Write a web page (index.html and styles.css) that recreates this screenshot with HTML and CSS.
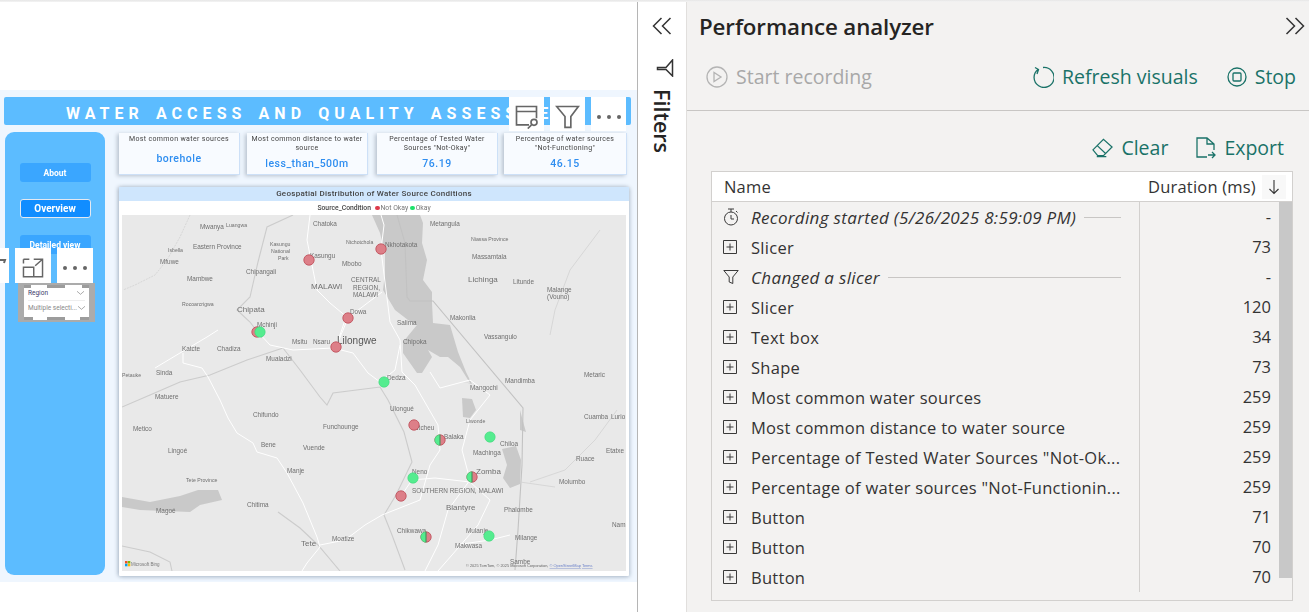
FILE: index.html
```html
<!DOCTYPE html>
<html lang="en">
<head>
<meta charset="utf-8">
<title>Performance analyzer</title>
<link rel="stylesheet" href="styles.css">
</head>
<body>
<div class="app">
  <section class="canvas">
    <div class="report">
      <header class="title-bar"><span>WATER&nbsp; ACCESS&nbsp; AND&nbsp; QUALITY&nbsp; ASSESSMENT</span></header>
      <div class="report-body">
        <nav class="side-nav">
          <div class="nav-btn">About</div>
          <div class="nav-btn nav-active">Overview</div>
          <div class="nav-btn">Detailed view</div>
        </nav>
        <div class="report-main">
          <div class="cards">
            <div class="card card-a"><div class="card-label">Most common water sources</div><div class="card-value card-value-low">borehole</div></div>
            <div class="card card-b"><div class="card-label">Most common distance to water source</div><div class="card-value">less_than_500m</div></div>
            <div class="card card-c"><div class="card-label">Percentage of Tested Water Sources "Not-Okay"</div><div class="card-value">76.19</div></div>
            <div class="card card-d"><div class="card-label">Percentage of water sources "Not-Functioning"</div><div class="card-value">46.15</div></div>
          </div>
          <div class="map-card">
            <div class="map-title">Geospatial Distribution of Water Source Conditions</div>
            <div class="legend"><b>Source_Condition</b><i class="dot dot-red"></i>Not Okay<i class="dot dot-green"></i>Okay</div>
            <svg class="map" viewBox="122 215 504 356" aria-label="Map of Malawi">
              <rect x="122" y="215" width="504" height="356" fill="#e9e9e9"/>
              <g fill="#c9c9c9">
                <path d="M372 215L380 233L385 253L385 273L383 290L395 310L408 320L417 325L403 342L403 353L417 373L422 373L432 357L428 350L440 357L448 357L460 367L470 383L463 382L472 384L466 372L458 352L450 325L433 323L432 303L432 292L423 280L427 260L422 243L423 223L420 215Z"/>
                <path d="M462 398L472 399L476 410L470 418L463 417Z"/>
                <path d="M502 449L516 446L521 460L520 484L510 488L503 478L507 465Z"/>
                <path d="M122 497L150 502L180 496L198 490L218 490L222 500L200 505L190 512L165 511L140 510L122 507Z"/>
                <path d="M520 410L524 425L526 432L520 430Z"/>
              </g>
              <g fill="none" stroke="#cccccc" stroke-width="1.100">
                <path d="M293 215L267 227L258 262L250 297L237 310L250 322L262 338"/>
                <path d="M122 407L150 395L180 382L210 375L247 360L283 348"/>
                <path d="M283 348L300 370L320 397L327 405L333 393L380 387L388 400L404 432L412 462L396 495L384 515L392 535L405 570"/>
                <path d="M397 215L405 243L407 297L410 301L433 301L523 408L522 465L518 530L515 570" stroke="#c2c2c2"/>
                <path d="M122 546L150 552L170 562L172 571"/>
                <path d="M278 512L300 528L318 545L340 571"/>
              </g>
              <g fill="none" stroke="#d2d2d2" stroke-width=".8">
                <path d="M190 215L180 237L167 260L155 275L135 285L123 290" stroke-dasharray="2 1"/>
                <path d="M600 230L570 270L555 310L550 335"/>
                <path d="M617 410L595 440L565 470L530 482"/>
                <path d="M520 482L555 487"/>
              </g>
              <g fill="none" stroke="#fff" stroke-width="1">
                <path d="M155 368L180 353L207 337L218 330M183 353L183 363L202 368L208 377L220 400L228 418L237 433L253 443L257 452L277 458L287 473L303 503L317 537L320 547L307 563L302 571"/>
                <path d="M320 545L345 540L365 525L382 515L420 500L430 465L440 450L438 425L415 385L402 372L400 340L390 322L381 250L384 225L381 215"/>
                <path d="M258 332L270 345L293 350L333 348L353 353L368 373L380 382L395 370L400 345"/>
                <path d="M310 215L307 240L317 290L330 303L348 318L336 347L345 320L382 292"/>
                <path d="M430 372L440 388L470 380L490 395L470 420L462 450L470 480L448 510L438 545L425 571"/>
                <path d="M401 496L412 480L435 478L470 482L490 500L478 525L452 555L438 571"/>
                <path d="M455 545L490 540L510 535"/>
              </g>
              <g class="map-labels">
                <text x="200" y="229">Mwanya</text><text x="226" y="227" class="xs">Luangwa</text><text x="313" y="226">Chatoka</text><text x="193" y="249">Eastern Province</text>
                <text x="270" y="246" class="xs">Kasungu</text><text x="271" y="253" class="xs">National</text><text x="278" y="260" class="xs">Park</text>
                <text x="160" y="264">Mfuwe</text><text x="168" y="252" class="xs">Isbella</text><text x="246" y="274">Chipangali</text><text x="187" y="281">Mambwe</text><text x="182" y="306" class="xs">Rocoarcrigwa</text>
                <text x="237" y="312" class="md">Chipata</text><text x="257" y="327">Mchinji</text><text x="310" y="258">Kasungu</text><text x="311" y="289" class="md">MALAWI</text>
                <text x="430" y="226">Metangula</text><text x="471" y="241" class="xs">Niassa Province</text><text x="472" y="259">Massamtala</text><text x="468" y="282" class="md">Lichinga</text><text x="513" y="284">Litunde</text>
                <text x="547" y="292">Malange</text><text x="547" y="299">(Vouno)</text><text x="346" y="244" class="xs">Ntchotchola</text><text x="385" y="247">Nkhotakota</text><text x="342" y="266">Mbobo</text>
                <text x="351" y="282">CENTRAL</text><text x="353" y="290">REGION,</text><text x="353" y="297">MALAWI</text><text x="350" y="314">Dowa</text><text x="397" y="325">Salima</text><text x="450" y="320">Makonlia</text>
                <text x="182" y="351">Katcte</text><text x="217" y="351">Chadiza</text><text x="156" y="375">Sinda</text><text x="122" y="377" class="xs">Petauke</text><text x="155" y="399">Matuere</text>
                <text x="266" y="361">Mualadzi</text><text x="292" y="344">Msitu</text><text x="313" y="344">Nsaru</text><text x="337" y="344" class="lg">Lilongwe</text><text x="253" y="417">Chifundo</text>
                <text x="133" y="431">Metico</text><text x="168" y="453">Lingoé</text><text x="186" y="482" class="xs">Tete Province</text><text x="261" y="447">Bene</text><text x="323" y="429">Funchounge</text>
                <text x="303" y="450">Vuende</text><text x="287" y="473">Manje</text><text x="247" y="507">Chitima</text><text x="156" y="513">Magoé</text><text x="301" y="546" class="md">Tete</text><text x="332" y="541">Moatize</text>
                <text x="403" y="344">Chipoka</text><text x="484" y="339">Vassangulo</text><text x="387" y="380">Dedza</text><text x="390" y="411">Ulongué</text><text x="414" y="430">Ntcheu</text>
                <text x="444" y="439">Balaka</text><text x="466" y="423" class="xs">Liwonde</text><text x="505" y="383">Mandimba</text><text x="470" y="390">Mangochi</text><text x="500" y="446">Chiloa</text><text x="473" y="455">Machinga</text>
                <text x="476" y="474" class="md">Zomba</text><text x="412" y="474">Neno</text><text x="412" y="493">SOUTHERN REGION, MALAWI</text><text x="446" y="510" class="md">Blantyre</text>
                <text x="504" y="512">Phalombe</text><text x="397" y="533">Chikwawa</text><text x="466" y="533">Mulanje</text><text x="515" y="540">Milange</text><text x="455" y="548">Makwasa</text><text x="510" y="564">Sambe</text>
                <text x="584" y="377">Metaric</text><text x="584" y="419">Cuamba</text><text x="611" y="419">Lurio</text><text x="576" y="461">Ruace</text><text x="606" y="453">Etatxe</text><text x="559" y="484">Molumbo</text><text x="612" y="527">Nam</text>
              </g>
              <text x="466" y="567" class="attr">© 2025 TomTom, © 2025 Microsoft Corporation, <tspan class="attr-link">© OpenStreetMap</tspan>  <tspan class="attr-link">Terms</tspan></text>
              <g>
                <rect x="125" y="561" width="2.5" height="2.5" fill="#f25022"/><rect x="127.8" y="561" width="2.5" height="2.5" fill="#7fba00"/><rect x="125" y="563.8" width="2.5" height="2.5" fill="#00a4ef"/><rect x="127.8" y="563.8" width="2.5" height="2.5" fill="#ffb900"/>
                <text x="131" y="566" class="bing">Microsoft Bing</text>
              </g>
              <g class="pin-red">
                <circle cx="309" cy="260" r="5.200"/><circle cx="381" cy="249" r="5.200"/><circle cx="348" cy="318" r="5.200"/><circle cx="336" cy="347" r="5.200"/><circle cx="257" cy="332" r="5.200"/><circle cx="414" cy="425" r="5.200"/><circle cx="401" cy="496" r="5.200"/><circle cx="440" cy="440" r="5.200"/><circle cx="472" cy="477" r="5.200"/><circle cx="426" cy="537" r="5.200"/>
              </g>
              <g class="pin-green">
                <circle cx="260" cy="332" r="5.200"/><circle cx="384" cy="382" r="5.200"/><circle cx="490" cy="437" r="5.200"/><circle cx="413" cy="478" r="5.200"/><circle cx="489" cy="536" r="5.200"/>
                <path d="M440 434.800A5.200 5.200 0 0 0 440 445.200Z"/><path d="M472 471.800A5.200 5.200 0 0 0 472 482.200Z"/><path d="M426 531.800A5.200 5.200 0 0 0 426 542.200Z"/>
              </g>
              <path d="M440 434.800V445.200M472 471.800V482.200M426 531.800V542.200" class="pin-split"/>
            </svg>
          </div>
        </div>
      </div>
    </div>

    <div class="hover-tools tools-title">
      <div class="tool"><svg viewBox="0 0 30 30" width="25" height="25"><path d="M27 17V3H3v22h15M3 9h24" class="ico-g"/><circle cx="24" cy="22" r="3.600" class="ico-g"/><path d="M21 25l-4.500 4.500" class="ico-g"/></svg></div>
      <div class="tool"><svg viewBox="0 0 30 30" width="25" height="25"><path d="M2 3h26L19 15v13h-7V15z" class="ico-g"/></svg></div>
      <div class="tool"><span class="dots"><i></i><i></i><i></i></span></div>
    </div>
    <div class="hover-tools tools-slicer">
      <div class="tool tool-cut"><svg viewBox="0 0 9 30" width="9" height="30"><path d="M0 9h5l-1 3" class="ico-g"/></svg></div>
      <div class="tool"><svg viewBox="0 0 30 30" width="22" height="22"><path d="M16 3h12v24H2V14h14v13M2 3h8M2 3v6M18 12L28 3M21 3h7v7" class="ico-g"/></svg></div>
      <div class="tool"><span class="dots"><i></i><i></i><i></i></span></div>
    </div>
    <div class="slicer">
      <i class="handle h-tl"></i><i class="handle h-t"></i><i class="handle h-tr"></i><i class="handle h-bl"></i><i class="handle h-b"></i><i class="handle h-br"></i>
      <div class="slicer-head"><span>Region</span><svg viewBox="0 0 8 4" width="7" height="4"><path d="M0 0l4 3.500L8 0" class="ico-thin"/></svg></div>
      <div class="slicer-box"><span>Multiple selecti...</span><svg viewBox="0 0 8 4" width="7" height="4"><path d="M0 0l4 3.500L8 0" class="ico-thin"/></svg></div>
    </div>
  </section>

  <aside class="filters">
    <svg class="chev" viewBox="0 0 20 18" width="20" height="18"><path d="M9.500 1L1.500 9l8 8M18.500 1l-8 8 8 8" class="ico-dark"/></svg>
    <svg class="funnel" viewBox="0 0 18 18" width="18" height="18"><path d="M16.500 1v16L10 10.500H1.500V8.500H10z" class="ico-dark"/></svg>
    <div class="filters-label">Filters</div>
  </aside>

  <main class="panel">
    <div class="panel-head">
      <h1>Performance analyzer</h1>
      <svg viewBox="0 0 20 18" width="20" height="18"><path d="M1.500 1l8 8-8 8M10.500 1l8 8-8 8" class="ico-dark"/></svg>
    </div>
    <div class="actions">
      <div class="action action-off"><svg viewBox="0 0 22 22" width="22" height="22"><circle cx="11" cy="11" r="10" class="ico-off"/><path d="M8 6.500v9l7-4.500z" class="ico-off"/></svg>Start recording</div>
      <div class="action-right">
        <div class="action"><svg viewBox="0 0 22 22" width="22" height="22"><path d="M6 3.500A10 10 0 1 0 11 1.500M3 1.500L6.500 3.500 5 8" class="ico-teal"/></svg>Refresh visuals</div>
        <div class="action"><svg viewBox="0 0 20 20" width="20" height="20"><circle cx="10" cy="10" r="9" class="ico-teal"/><rect x="6" y="6" width="8" height="8" rx="1" class="ico-teal"/></svg><span class="stop">Stop</span></div>
      </div>
    </div>
    <div class="tools">
      <div class="action"><svg viewBox="0 0 22 20" width="21" height="20"><path d="M1 12L12 1l9 8-9 9H6zM5.500 7.500l9 8.500M5 19h10" class="ico-teal"/></svg>Clear</div>
      <div class="action"><svg viewBox="0 0 20 22" width="20" height="22"><path d="M11 20H1V1h10l7 6v6M11 1v6h7M12 18h7M16 15l3 3-3 3" class="ico-teal"/></svg>Export</div>
    </div>
    <div class="table">
      <div class="thead">
        <div class="th-name">Name</div>
        <div class="th-dur">Duration (ms)</div>
        <div class="sort"><svg viewBox="0 0 12 16" width="12" height="16"><path d="M6 1v13.500M1.500 10L6 14.500 10.500 10" class="ico-thin-dark"/></svg></div>
      </div>
      <div class="tbody">
        <div class="rows">
          <div class="row"><div class="name evt"><svg viewBox="0 0 16 18" width="16" height="18"><circle cx="8" cy="10.500" r="6.500" class="ico-row"/><path d="M5 1h6M8 1v3M8 7v4h3M13 3l1.500 1.500" class="ico-row"/></svg><em>Recording started (5/26/2025 8:59:09 PM)</em><span class="rule"></span></div><div class="dur">-</div></div>
          <div class="row"><div class="name"><svg viewBox="0 0 14 14" width="14" height="14"><path d="M.5.500h13v13H.500zM7 3.500v7M3.500 7h7" class="ico-row"/></svg>Slicer</div><div class="dur">73</div></div>
          <div class="row"><div class="name evt"><svg viewBox="0 0 16 16" width="16" height="16"><path d="M.8 1.500h14.400L9.800 8v6.500L6.200 13V8z" class="ico-row"/></svg><em>Changed a slicer</em><span class="rule"></span></div><div class="dur">-</div></div>
          <div class="row"><div class="name"><svg viewBox="0 0 14 14" width="14" height="14"><path d="M.5.500h13v13H.500zM7 3.500v7M3.500 7h7" class="ico-row"/></svg>Slicer</div><div class="dur">120</div></div>
          <div class="row"><div class="name"><svg viewBox="0 0 14 14" width="14" height="14"><path d="M.5.500h13v13H.500zM7 3.500v7M3.500 7h7" class="ico-row"/></svg>Text box</div><div class="dur">34</div></div>
          <div class="row"><div class="name"><svg viewBox="0 0 14 14" width="14" height="14"><path d="M.5.500h13v13H.500zM7 3.500v7M3.500 7h7" class="ico-row"/></svg>Shape</div><div class="dur">73</div></div>
          <div class="row"><div class="name"><svg viewBox="0 0 14 14" width="14" height="14"><path d="M.5.500h13v13H.500zM7 3.500v7M3.500 7h7" class="ico-row"/></svg>Most common water sources</div><div class="dur">259</div></div>
          <div class="row"><div class="name"><svg viewBox="0 0 14 14" width="14" height="14"><path d="M.5.500h13v13H.500zM7 3.500v7M3.500 7h7" class="ico-row"/></svg>Most common distance to water source</div><div class="dur">259</div></div>
          <div class="row"><div class="name"><svg viewBox="0 0 14 14" width="14" height="14"><path d="M.5.500h13v13H.500zM7 3.500v7M3.500 7h7" class="ico-row"/></svg>Percentage of Tested Water Sources "Not-Ok...</div><div class="dur">259</div></div>
          <div class="row"><div class="name"><svg viewBox="0 0 14 14" width="14" height="14"><path d="M.5.500h13v13H.500zM7 3.500v7M3.500 7h7" class="ico-row"/></svg>Percentage of water sources "Not-Functionin...</div><div class="dur">259</div></div>
          <div class="row"><div class="name"><svg viewBox="0 0 14 14" width="14" height="14"><path d="M.5.500h13v13H.500zM7 3.500v7M3.500 7h7" class="ico-row"/></svg>Button</div><div class="dur">71</div></div>
          <div class="row"><div class="name"><svg viewBox="0 0 14 14" width="14" height="14"><path d="M.5.500h13v13H.500zM7 3.500v7M3.500 7h7" class="ico-row"/></svg>Button</div><div class="dur">70</div></div>
          <div class="row"><div class="name"><svg viewBox="0 0 14 14" width="14" height="14"><path d="M.5.500h13v13H.500zM7 3.500v7M3.500 7h7" class="ico-row"/></svg>Button</div><div class="dur">70</div></div>
        </div>
        <div class="scroll"><div class="thumb"></div></div>
      </div>
    </div>
  </main>
</div>
</body>
</html>
```
FILE: styles.css
```css
* { box-sizing: border-box; }
html, body { margin: 0; height: 100%; overflow: hidden; }
body { font-family: "Open Sans", "Noto Sans", sans-serif; background: #fff; color: #252423; }
.app { display: flex; width: 1309px; height: 612px; position: relative; }
.app::before { content: ""; position: absolute; left: 0; right: 0; top: 0; height: 2px; background: linear-gradient(#e6e6e6, #f4f4f4); z-index: 5; }

/* Report canvas */
.canvas { width: 638px; height: 612px; border-right: 1px solid #b5b5b5; padding-top: 90px; position: relative; overflow: hidden; }
.report { height: 492px; background: #eff6fe; padding: 7px 6px 6px 4px; display: flex; flex-direction: column; gap: 7px; font-family: "Roboto", "Liberation Sans", sans-serif; filter: blur(.25px); }
.title-bar { height: 28px; flex: none; background: #5cbcff; border-radius: 2px; display: flex; align-items: center; padding: 4px 0 0 62px; color: #fff; font-weight: 700; font-size: 16px; letter-spacing: 5.05px; word-spacing: -3px; white-space: nowrap; overflow: hidden; }
.report-body { flex: 1; display: flex; gap: 14px; min-height: 0; padding-left: 1px; }
.side-nav { width: 100px; height: 443px; background: #5cbcff; border-radius: 9px; padding-top: 31px; display: flex; flex-direction: column; align-items: center; gap: 17px; flex: none; }
.nav-btn { width: 71px; height: 19px; background: #3aa6ff; border-radius: 3px; color: #fff; font-size: 8.5px; font-weight: 700; display: flex; align-items: center; justify-content: center; padding-top: 1px; }
.nav-active { background: #118dff; border: 1px solid #e4e9f2; font-size: 10px; padding-top: 0; }
.report-main { flex: 1; display: flex; flex-direction: column; gap: 12px; min-width: 0; }
.cards { display: flex; height: 43px; padding-top: 1px; }
.card { background: #f8fbff; box-shadow: -2px 1px 4px #b9c3cf; border-right: 1px solid #cde0f7; border-bottom: 1px solid #cde0f7; padding: 2px 3px 0; text-align: center; display: flex; flex-direction: column; }
.card-a { width: 121px; margin-right: 7px; }
.card-b { width: 121px; margin-right: 9px; }
.card-c { width: 121px; margin-right: 6px; }
.card-d { width: 123px; }
.card-label { font-size: 7px; line-height: 9px; letter-spacing: .35px; color: #444; height: 18px; }
.card-value { font-size: 10.500px; color: #2f8ef0; letter-spacing: .5px; line-height: 13px; padding-top: 4px; font-weight: 500; }
.card-value-low { padding-top: 0; margin-top: -1px; }
.map-card { width: 510px; height: 389px; background: #fff; box-shadow: -1px 0 4px #a9b6c6, 1px 1px 4px #c3cfdc; border-radius: 1px; display: flex; flex-direction: column; }
.map-title { height: 14px; background: #cfe6fd; font-size: 8px; font-weight: 500; letter-spacing: .28px; color: #444; text-align: center; line-height: 13px; flex: none; }
.legend { height: 14px; flex: none; display: flex; align-items: center; justify-content: center; font-size: 6.800px; color: #777; }
.legend b { color: #444; font-weight: 500; margin-right: 2px; }
.dot { width: 4.500px; height: 4.500px; border-radius: 50%; margin: 0 1px 0 2px; }
.dot-red { background: #dd3b4b; }
.dot-green { background: #1ee26b; }
.map { display: block; width: 504px; height: 356px; margin: 0 0 0 3px; flex: none; filter: blur(.2px); }
.map-labels text { font-family: "Liberation Sans", sans-serif; font-size: 6.4px; fill: #6f6f6f; }
.map-labels .xs { font-size: 5.2px; }
.map-labels .md { font-size: 8px; }
.map-labels .lg { font-size: 10px; fill: #555; }
.attr { font-family: "Liberation Sans", sans-serif; font-size: 3.900px; fill: #666; }
.attr-link { fill: #6b80c8; text-decoration: underline; }
.bing { font-family: "Liberation Sans", sans-serif; font-size: 4.500px; fill: #777; }
.pin-red circle { fill: #dd7f88; stroke: #bd4a56; stroke-width: .8; }
.pin-green circle, .pin-green path { fill: #55ec8f; stroke: #3ed67a; stroke-width: .6; }
.pin-split { fill: none; stroke: #4e6e50; stroke-width: .8; }

/* Overlays on the report */
.hover-tools { position: absolute; display: flex; gap: 6px; z-index: 2; }
.tool { width: 35px; height: 34px; background: #fff; display: flex; align-items: center; justify-content: center; padding-top: 5px; }
.tools-title { left: 509px; top: 97px; }
.tools-slicer { left: 0; top: 248px; height: 35px; }
.tools-slicer .tool { height: 35px; width: 36px; padding-top: 4px; }
.tools-slicer .tool-cut { width: 9px; padding-top: 0; }
.dots { display: flex; gap: 6px; }
.dots i { width: 4px; height: 4px; border-radius: 50%; background: #666; }
.ico-g { fill: none; stroke: #666; stroke-width: 2; }
.ico-thin { fill: none; stroke: #888; stroke-width: .8; }
.slicer { position: absolute; left: 18px; top: 283px; width: 77px; height: 39px; border: solid #ababab; border-width: 2px 6px; background: #fff; padding: 3px 4px 0; z-index: 2; font-family: "Roboto", sans-serif; }
.handle { position: absolute; background: #9c9c9c; }
.h-tl { left: 0; top: 0; width: 7px; height: 3px; }
.h-t { left: 23px; top: 0; width: 18px; height: 3px; }
.h-tr { right: 0; top: 0; width: 7px; height: 3px; }
.h-bl { left: 0; bottom: 0; width: 9px; height: 3px; }
.h-b { left: 23px; bottom: 0; width: 18px; height: 3px; }
.h-br { right: 0; bottom: 0; width: 9px; height: 3px; }
.slicer-head { display: flex; justify-content: space-between; align-items: center; font-size: 6.500px; color: #3a3a6a; padding-right: 1px; height: 10px; }
.slicer-box { margin-top: 2px; height: 15px; display: flex; justify-content: space-between; align-items: center; font-size: 6.500px; color: #888; border-top: 1px solid #eee; white-space: nowrap; gap: 1px; }

/* Filters strip */
.filters { width: 49px; height: 612px; flex: none; background: #fff; border-right: 1px solid #e1dfdd; display: flex; flex-direction: column; align-items: center; padding-top: 17px; }
.chev { display: block; }
.funnel { margin-top: 24px; margin-left: 5px; display: block; }
.filters-label { writing-mode: vertical-rl; font-size: 21.500px; font-weight: 600; margin-top: 12px; line-height: 20px; color: #252423; }
.ico-dark { fill: none; stroke: #333; stroke-width: 1.500; }

/* Performance analyzer */
.panel { flex: 1; min-width: 0; background: #f3f2f1; display: flex; flex-direction: column; }
.panel-head { height: 52px; flex: none; display: flex; justify-content: space-between; align-items: center; padding: 0 4px 0 12px; }
.panel-head h1 { font-size: 22.300px; font-weight: 600; margin: 0; letter-spacing: -.1px; color: #252423; }
.actions { height: 59px; flex: none; border-bottom: 1px solid #c8c6c4; display: flex; justify-content: space-between; padding: 0 13px 9px 19px; align-items: center; }
.action-right { display: flex; gap: 29px; }
.action { display: flex; align-items: center; gap: 8px; font-size: 19.500px; color: #1a7268; white-space: nowrap; }
.action-off { color: #a8a8a8; }
.stop { margin-left: 0; }
.ico-off { fill: none; stroke: #b4b4b4; stroke-width: 1.300; }
.ico-teal { fill: none; stroke: #1a7268; stroke-width: 1.300; }
.tools { height: 60px; flex: none; display: flex; justify-content: flex-end; gap: 28px; padding: 13px 25px 0 0; align-items: center; }
.table { margin-left: 24px; width: 582px; height: 430px; border: 1px solid #d2d0ce; display: flex; flex-direction: column; flex: none; }
.thead { height: 30px; flex: none; background: #fff; display: flex; align-items: center; font-size: 16.500px; letter-spacing: .2px; border-bottom: 1px solid #d2d0ce; color: #333; }
.th-name { flex: 1; padding-left: 12px; }
.th-dur { width: 114px; }
.sort { width: 24px; height: 24px; background: #f8f8f8; margin-right: 6px; display: flex; align-items: center; justify-content: center; }
.ico-thin-dark { fill: none; stroke: #333; stroke-width: 1.100; }
.tbody { flex: 1; display: flex; min-height: 0; }
.rows { flex: 1; display: flex; flex-direction: column; }
.row { height: 30px; flex: none; display: flex; font-size: 16.500px; letter-spacing: .28px; color: #333; }
.name { width: 428px; height: 30px; border-right: 1px solid #d2d0ce; display: flex; align-items: center; padding: 0 18px 0 11px; gap: 14px; white-space: nowrap; overflow: hidden; }
.name svg { flex: none; }
.evt { gap: 12px; }
.evt em { font-size: 17px; letter-spacing: .33px; }
.rule { flex: 1; height: 1px; background: #c8c6c4; margin-left: -4px; }
.dur { flex: 1; text-align: right; padding-right: 8px; line-height: 30px; letter-spacing: 0; }
.ico-row { fill: none; stroke: #3a3a3a; stroke-width: 1; }
.scroll { width: 13px; flex: none; }
.thumb { height: 376px; background: #c8c8c8; }
```
